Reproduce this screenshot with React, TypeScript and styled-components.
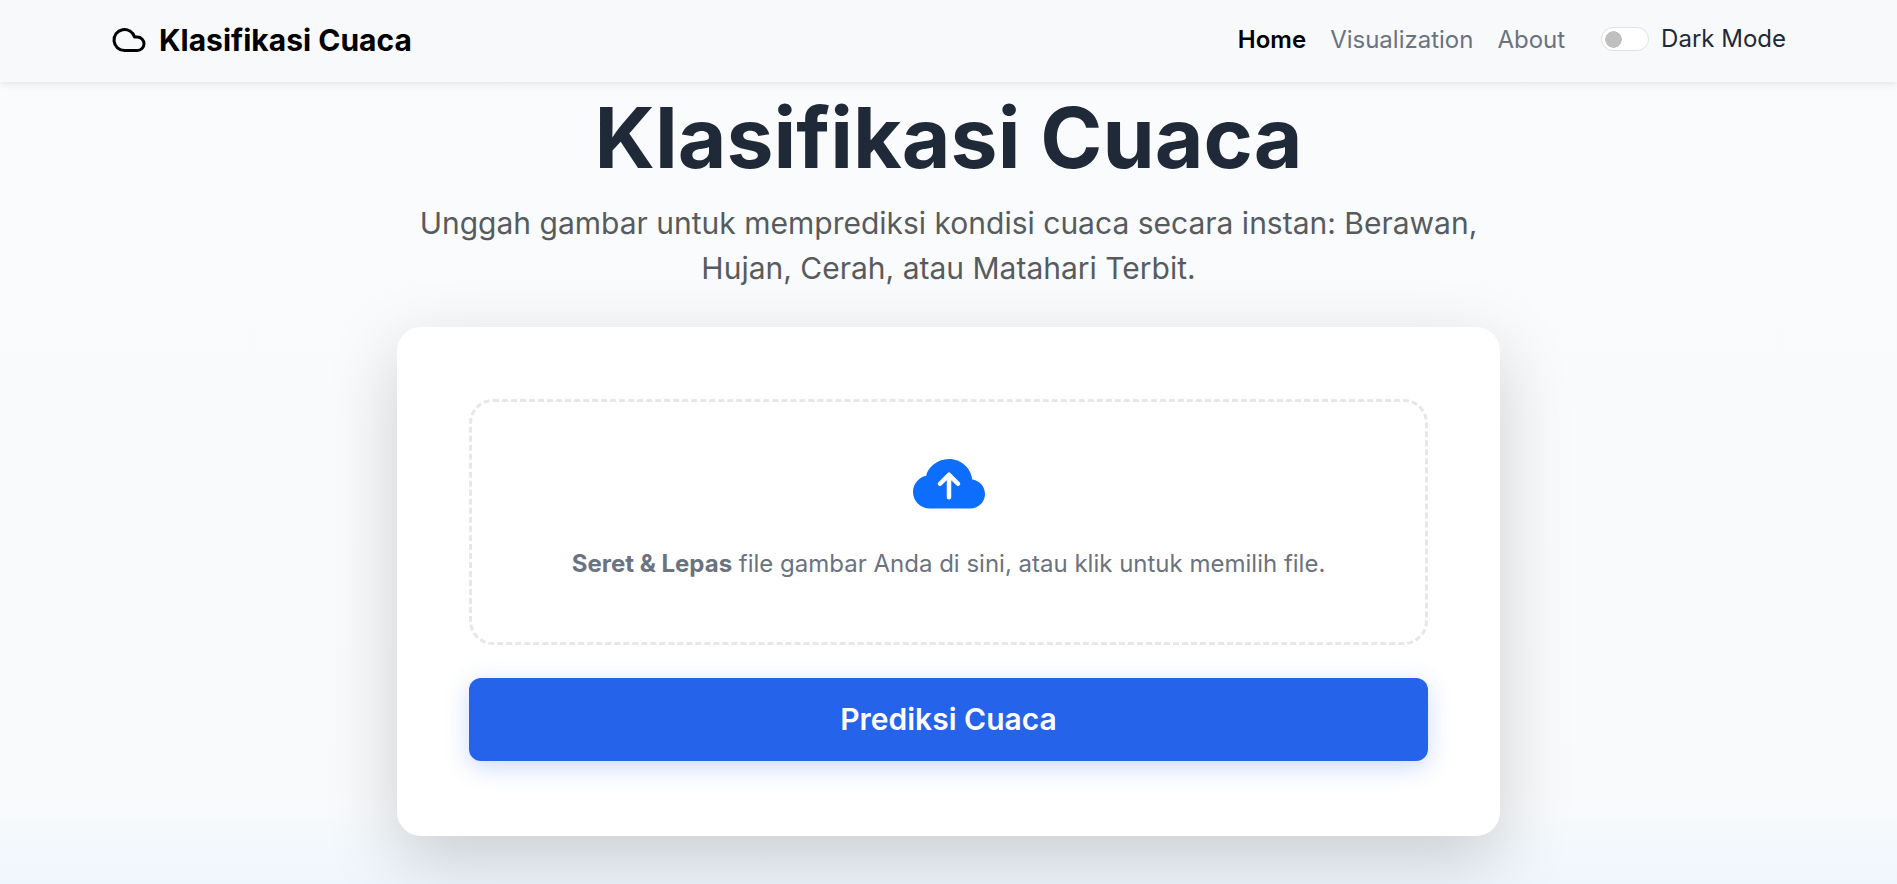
import React, { useState } from 'react';
import styled, { createGlobalStyle } from 'styled-components';
import { Cloud } from 'lucide-react';
import { BsCloudArrowUpFill } from 'react-icons/bs';

const GlobalStyle = createGlobalStyle`
  *, *::before, *::after { box-sizing: border-box; }
  body {
    margin: 0;
    color: #1f2937;
    background: #fafbfd;
    font-family: Inter, "Liberation Sans", sans-serif;
    font-size: 24px;
    line-height: 36px;
  }
  h1, p { margin: 0; }
`;

const Page = styled.div`
  display: flex;
  flex-direction: column;
  min-height: 100vh;
  background: linear-gradient(to bottom, #fafbfd 0, #f9fafc 91%, #f3f8fc 96%, #eff6fe 100%);
`;

const Navbar = styled.header`
  position: sticky;
  top: 0;
  z-index: 10;
  display: flex;
  align-items: center;
  justify-content: space-between;
  min-height: 82px;
  padding: 0 111px 2px;
  background: #f8f9fb;
  box-shadow: 0 3px 6px rgba(0, 0, 0, 0.075);
`;

const Brand = styled.a`
  display: flex;
  align-items: center;
  gap: 12px;
  color: #000;
  font-size: 30px;
  font-weight: 700;
  line-height: 45px;
  text-decoration: none;
`;

const BrandIcon = styled(Cloud)`
  width: 36px;
  height: 36px;
`;

const NavItems = styled.nav`
  display: flex;
  align-items: center;
  gap: 24px;
`;

const NavLink = styled.a<{ $active?: boolean }>`
  color: ${(p) => (p.$active ? '#000' : '#6b7280')};
  font-weight: ${(p) => (p.$active ? 600 : 400)};
  text-decoration: none;
`;

const ThemeSwitch = styled.label`
  display: flex;
  align-items: center;
  gap: 12px;
  margin-left: 12px;
  padding-bottom: 2px;
  cursor: pointer;
`;

const SwitchInput = styled.input`
  appearance: none;
  width: 48px;
  height: 24px;
  margin: 0;
  border: 1px solid #dee2e6;
  border-radius: 24px;
  background: #fff radial-gradient(circle closest-side, #bfbfbf 94%, transparent) 3px center / 17px 17px no-repeat;
  cursor: pointer;

  &:checked {
    background-color: #0d6efd;
    background-image: radial-gradient(circle closest-side, #fff 94%, transparent);
    background-position: right 3px center;
  }
`;

const Main = styled.main`
  display: flex;
  flex-direction: column;
  align-items: center;
  width: 100%;
  max-width: 1103px;
  margin: 0 auto;
  padding: 5px 0 48px;
`;

const Title = styled.h1`
  font-size: 84px;
  font-weight: 700;
  line-height: 101px;
  text-align: center;
`;

const Subtitle = styled.p`
  margin: 13px 0 36px;
  color: #575b5e;
  font-size: 30px;
  line-height: 45px;
  text-align: center;
`;

const Card = styled.form`
  display: flex;
  flex-direction: column;
  gap: 33px;
  width: 100%;
  padding: 72px 72px 75px;
  border-radius: 24px;
  background: #fff;
  box-shadow: 0 24px 72px rgba(0, 0, 0, 0.175);
`;

const DropZone = styled.label`
  display: flex;
  flex-direction: column;
  align-items: center;
  gap: 24px;
  padding: 48px 48px 60px;
  border: 3px dashed #e5e7eb;
  border-radius: 24px;
  color: #6b7280;
  text-align: center;
  cursor: pointer;
`;

const UploadIcon = styled(BsCloudArrowUpFill)`
  width: 72px;
  height: 72px;
  color: #0d6efd;
`;

const SubmitButton = styled.button`
  padding: 19px 24px;
  border: 0;
  border-radius: 12px;
  background: #2563eb;
  box-shadow: 0 6px 24px rgba(37, 99, 235, 0.24);
  color: #fff;
  font-family: inherit;
  font-size: 30px;
  font-weight: 600;
  line-height: 45px;
  cursor: pointer;
`;

export default function App() {
  const [dark, setDark] = useState(false);

  return (
    <Page>
      <GlobalStyle />
      <Navbar>
        <Brand href="#home">
          <BrandIcon aria-hidden="true" />
          Klasifikasi Cuaca
        </Brand>
        <NavItems>
          <NavLink href="#home" $active>Home</NavLink>
          <NavLink href="#visualization">Visualization</NavLink>
          <NavLink href="#about">About</NavLink>
          <ThemeSwitch>
            <SwitchInput
              type="checkbox"
              role="switch"
              checked={dark}
              onChange={(e) => setDark(e.target.checked)}
            />
            Dark Mode
          </ThemeSwitch>
        </NavItems>
      </Navbar>
      <Main>
        <Title>Klasifikasi Cuaca</Title>
        <Subtitle>
          Unggah gambar untuk memprediksi kondisi cuaca secara instan: Berawan, Hujan, Cerah, atau
          Matahari Terbit.
        </Subtitle>
        <Card onSubmit={(e) => e.preventDefault()}>
          <DropZone>
            <input type="file" accept="image/*" hidden />
            <UploadIcon aria-hidden="true" />
            <span>
              <strong>Seret &amp; Lepas</strong> file gambar Anda di sini, atau klik untuk memilih file.
            </span>
          </DropZone>
          <SubmitButton type="submit">Prediksi Cuaca</SubmitButton>
        </Card>
      </Main>
    </Page>
  );
}
